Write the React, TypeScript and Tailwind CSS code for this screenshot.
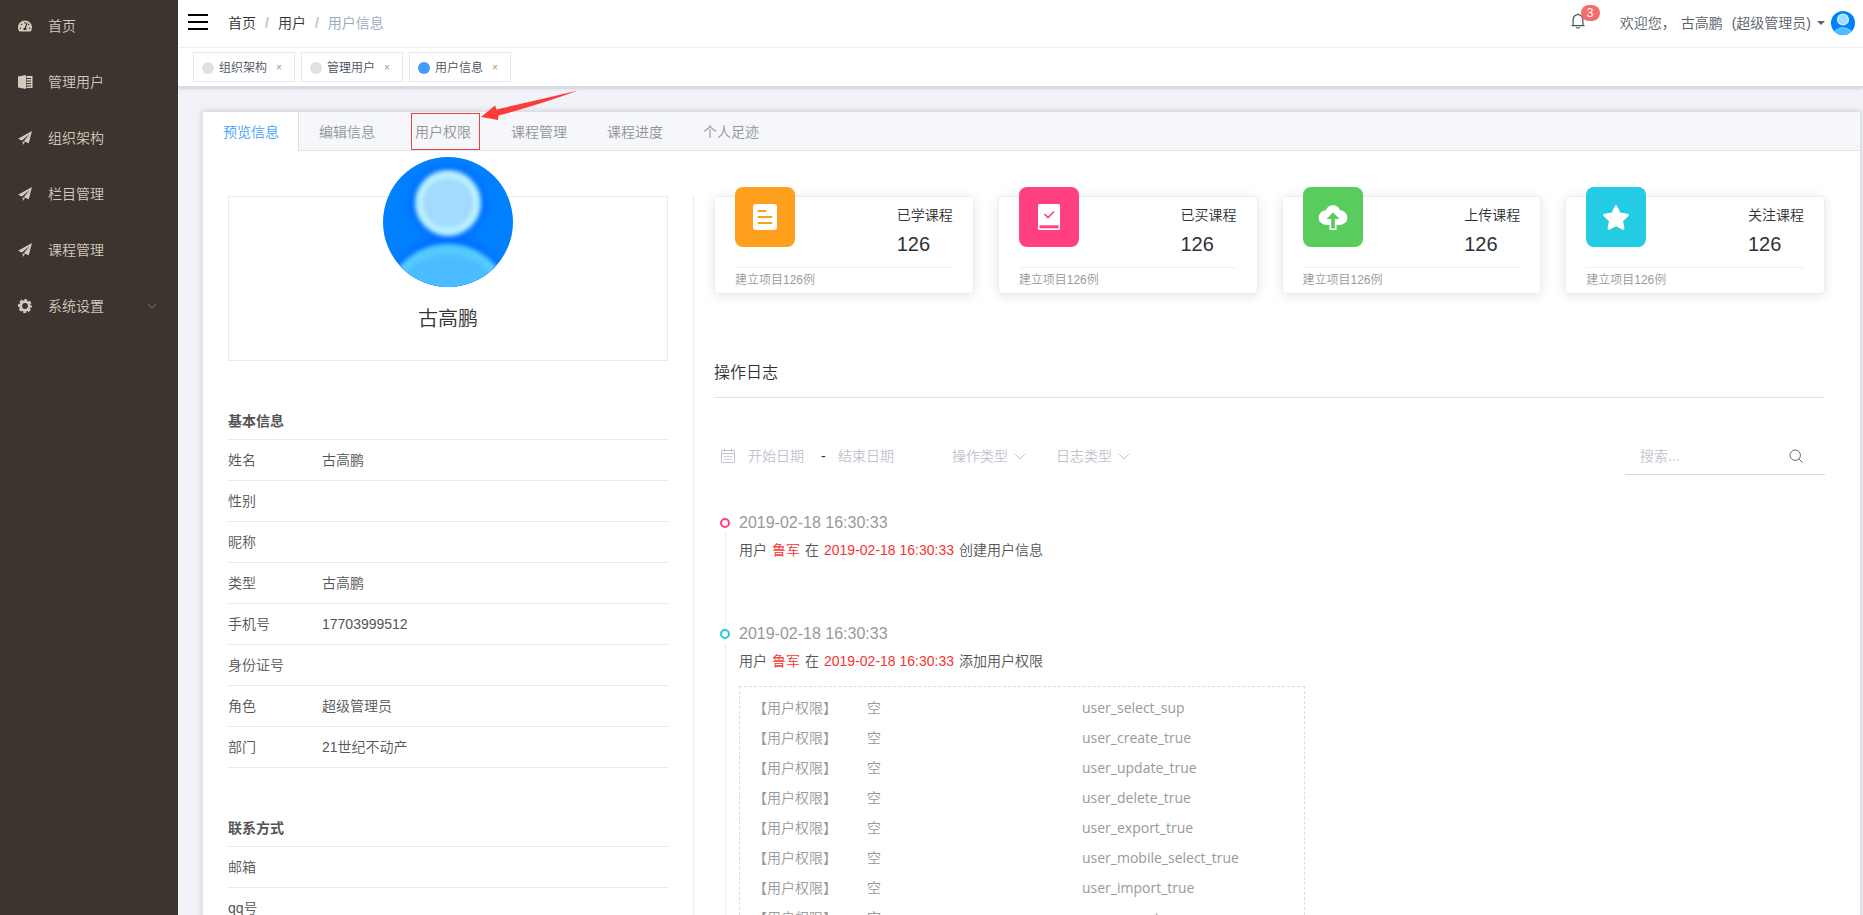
import { FaTachometerAlt } from "react-icons/fa";

const AVATAR_BLUE = "#0080ff";

function Avatar({ id, className, soft }: { id: string; className: string; soft?: boolean }) {
  return (
    <svg viewBox="0 0 130 130" className={className} role="img" aria-label="古高鹏">
      <defs>
        <clipPath id={id + "-clip"}>
          <circle cx="65" cy="65" r="65" />
        </clipPath>
        <filter id={id + "-glow"} x="-30%" y="-30%" width="160%" height="160%">
          <feGaussianBlur stdDeviation={soft ? 2 : 0.5} />
        </filter>
        <filter id={id + "-halo"} x="-30%" y="-30%" width="160%" height="160%">
          <feGaussianBlur stdDeviation="4" />
        </filter>
      </defs>
      <g clipPath={`url(#${id}-clip)`}>
        <rect width="130" height="130" fill={AVATAR_BLUE} />
        {soft && (
          <g filter={`url(#${id}-halo)`} fill="#006eff">
            <circle cx="65" cy="46" r="38" />
            <ellipse cx="65" cy="140" rx="62" ry="60" />
          </g>
        )}
        <g filter={`url(#${id}-glow)`}>
          <circle cx="65" cy="46" r="33" fill="#b8f0ff" />
          <circle cx="65" cy="46" r="25" fill="#a3daff" />
          <ellipse cx="65" cy="142" rx="60" ry="55" fill="#54caff" />
          <ellipse cx="65" cy="148" rx="54" ry="50" fill="#4dbbff" />
        </g>
      </g>
    </svg>
  );
}

function PlaneIcon() {
  return (
    <svg viewBox="0 0 14 14" className="size-[14px]" fill="currentColor" aria-hidden="true">
      <path d="M14 0 0 7.800l4 1.700 7.700-6.800-5.900 7.500 5 2z" />
      <path d="M4.700 10.300V14l2.200-2.800z" />
    </svg>
  );
}

function ManageIcon() {
  return (
    <svg viewBox="0 0 15 14" className="h-[14px] w-[15px]" fill="currentColor" aria-hidden="true">
      <path d="M0 1.400 8 0v14L0 12.600z" />
      <path d="M8.500 1h6v12h-6v-1.500H13v-1H8.500V9H13V8H8.500V6.500H13v-1H8.500V4H13V3H8.500z" />
    </svg>
  );
}

function GearIcon() {
  return (
    <svg viewBox="0 0 14 14" className="size-[14px]" fill="none" stroke="currentColor" aria-hidden="true">
      <circle cx="7" cy="7" r="4.300" strokeWidth="2.800" />
      <circle cx="7" cy="7" r="6.100" strokeWidth="1.800" strokeDasharray="3 1.790" strokeDashoffset="1.500" />
    </svg>
  );
}

function Chevron({ className }: { className: string }) {
  return (
    <svg viewBox="0 0 12 7" className={className} fill="none" stroke="currentColor" aria-hidden="true">
      <path d="m.7.7 5.300 5.300L11.300.7" />
    </svg>
  );
}

const menu = [
  { label: "首页", icon: <FaTachometerAlt className="size-[14px]" /> },
  { label: "管理用户", icon: <ManageIcon /> },
  { label: "组织架构", icon: <PlaneIcon /> },
  { label: "栏目管理", icon: <PlaneIcon /> },
  { label: "课程管理", icon: <PlaneIcon /> },
  { label: "系统设置", icon: <GearIcon />, expandable: true },
];

function Sidebar() {
  return (
    <nav className="w-[178px] shrink-0 bg-[#3c342e] text-[#d3c9bd]">
      <ul>
        {menu.map((item) => (
          <li key={item.label}>
            <a href="#" className="flex h-14 items-center pr-[21px] pb-1 pl-[18px]">
              <span className="flex w-[30px] items-center">{item.icon}</span>
              <span className="flex-1">{item.label}</span>
              {item.expandable && <Chevron className="h-[6px] w-[10px] text-[#8a847e]" />}
            </a>
          </li>
        ))}
      </ul>
    </nav>
  );
}

function TopBar() {
  return (
    <header className="flex h-12 items-center justify-between border-b border-[#f3f3f3] pr-2 pb-[2px] pl-[10px]">
      <div className="flex items-center">
        <button aria-label="菜单" className="mr-5 pb-[2px]">
          <svg viewBox="0 0 20 16" className="h-4 w-5" fill="#000" aria-hidden="true">
            <path d="M0 0h20v2H0zM0 7h20v2H0zM0 14h20v2H0z" />
          </svg>
        </button>
        <nav className="flex text-[#303133]">
          <a href="#">首页</a>
          <span className="mx-[9px] font-bold text-[#c0c4cc]">/</span>
          <a href="#">用户</a>
          <span className="mx-[9px] font-bold text-[#c0c4cc]">/</span>
          <span className="text-[#97a8be]">用户信息</span>
        </nav>
      </div>
      <div className="flex items-center">
        <button aria-label="通知" className="relative mr-[35px] pb-1">
          <svg viewBox="0 0 14 16" className="h-4 w-[14px]" fill="none" stroke="#48505c" strokeWidth="1.200" aria-hidden="true">
            <path d="M.5 12.700h13M2.100 12.700V6.500a4.900 4.900 0 0 1 9.800 0v6.200M5.300 14.200a1.900 1.500 0 0 0 3.400 0M7 1.600V.4" />
          </svg>
          <span className="absolute -top-2 left-[10px] flex h-4 w-[19px] items-center justify-center rounded-full bg-[#f56c6c] text-xs text-white">
            3
          </span>
        </button>
        <button className="flex items-center text-[#5a5e66]">
          <span className="mr-[5px]">欢迎您，</span>
          <span className="mr-[9px]">古高鹏</span>
          <span>(超级管理员)</span>
          <svg viewBox="0 0 8 4" className="mx-[6px] h-1 w-2" fill="currentColor" aria-hidden="true">
            <path d="M0 0h8L4 4z" />
          </svg>
          <Avatar id="small" className="size-6" />
        </button>
      </div>
    </header>
  );
}

const openPages = [
  { label: "组织架构", active: false },
  { label: "管理用户", active: false },
  { label: "用户信息", active: true },
];

function PageTags() {
  return (
    <div className="flex gap-[6px] border-b-2 border-[#d8dce1] px-[15px] py-1 text-xs text-[#495060] shadow-sm">
      {openPages.map((page) => (
        <div key={page.label} className="flex h-[30px] w-[102px] items-center border border-[#e6e8ea] bg-white pt-px pl-2">
          <span className={page.active ? "size-3 rounded-full bg-[#409eff]" : "size-3 rounded-full bg-[#e0e1e7]"} />
          <a href="#" className="ml-[5px]">{page.label}</a>
          <button aria-label={"关闭" + page.label} className="ml-[9px] text-[10px] text-[#999]">×</button>
        </div>
      ))}
    </div>
  );
}

const tabs = ["预览信息", "编辑信息", "用户权限", "课程管理", "课程进度", "个人足迹"];

function TabBar() {
  return (
    <div role="tablist" className="flex h-[39px] bg-[#f5f7fa] shadow-[inset_0_-1px_0_#dfe4ed]">
      {tabs.map((tab, i) => (
        <button
          key={tab}
          role="tab"
          aria-selected={i === 0}
          className={
            i === 0
              ? "border-r border-[#dcdfe6] bg-white pr-[19px] pl-5 text-[#409eff]"
              : "relative px-5 text-[#909399]"
          }
        >
          {tab}
          {tab === "用户权限" && (
            <>
              <span className="absolute top-px bottom-px left-4 w-[69px] border border-[#f04046]" />
              <svg viewBox="0 0 98 30" className="absolute -top-[22px] left-[86px] z-10 h-[30px] w-[98px]" fill="#fc3a3a" aria-hidden="true">
                <path d="M0 27 14 15.500l1.500 4Q57 10 97 .5 59 14.500 17.500 25.500l-.5 4.500z" />
              </svg>
            </>
          )}
        </button>
      ))}
    </div>
  );
}

function InfoSection({ title, rows }: { title: string; rows: [string, string][] }) {
  return (
    <section className="mt-[50px]">
      <h3 className="flex h-[29px] items-start border-b border-[#ebebee] font-bold">{title}</h3>
      <dl>
        {rows.map(([name, value]) => (
          <div key={name} className="flex h-[41px] items-center border-b border-[#ebebee]">
            <dt className="w-[94px]">{name}</dt>
            <dd>{value}</dd>
          </div>
        ))}
      </dl>
    </section>
  );
}

function Profile() {
  return (
    <div className="w-[440px] shrink-0 text-[#555]">
      <div className="flex h-[165px] flex-col items-center border border-[#ebebee]">
        <Avatar id="large" className="-mt-10 size-[130px] shrink-0" soft />
        <h2 className="mt-[17px] text-xl leading-[30px] text-[#333]">古高鹏</h2>
      </div>
      <InfoSection
        title="基本信息"
        rows={[
          ["姓名", "古高鹏"],
          ["性别", ""],
          ["昵称", ""],
          ["类型", "古高鹏"],
          ["手机号", "17703999512"],
          ["身份证号", ""],
          ["角色", "超级管理员"],
          ["部门", "21世纪不动产"],
        ]}
      />
      <InfoSection title="联系方式" rows={[["邮箱", ""], ["qq号", ""]]} />
    </div>
  );
}

const stats = [
  {
    title: "已学课程",
    tile: "bg-[#ff9f1e]",
    icon: (
      <>
        <rect x="3" y="2" width="24" height="26" rx="3" fill="#fff" />
        <path d="M8.500 9h7M8.500 15h13M8.500 21h13" stroke="#ff9f1e" strokeWidth="2" strokeLinecap="round" />
      </>
    ),
  },
  {
    title: "已买课程",
    tile: "bg-[#ff4081]",
    icon: (
      <>
        <rect x="4" y="2" width="22" height="26" rx="1.500" fill="#fff" />
        <path d="m10.500 12 3.500 3.500L20 9.500" stroke="#ff4081" strokeWidth="1.600" fill="none" />
        <path d="M5.500 23.300h19v3h-19z" fill="#ff4081" />
      </>
    ),
  },
  {
    title: "上传课程",
    tile: "bg-[#58cc5c]",
    icon: (
      <>
        <path d="M11.500 28v-5H8A7.200 7.200 0 0 1 8 8.300 7.400 7.400 0 0 1 22 8.300 7.200 7.200 0 0 1 22 23h-3.500v5z" fill="#fff" />
        <path d="M15 10.500 21.500 17h-4.700v9.500h-3.600V17H8.500z" fill="#58cc5c" />
      </>
    ),
  },
  {
    title: "关注课程",
    tile: "bg-[#23cce2]",
    icon: (
      <path
        d="m15 4.500 3.600 7.300 8 1.200-5.800 5.600 1.400 8L15 22.800l-7.200 3.800 1.400-8L3.400 13l8-1.200z"
        fill="#fff"
        stroke="#fff"
        strokeWidth="2.500"
        strokeLinejoin="round"
      />
    ),
  },
];

function StatCards() {
  return (
    <div className="grid grid-cols-4 gap-6">
      {stats.map((s) => (
        <article key={s.title} className="h-[98px] rounded border border-[#ebeef5] px-5 shadow-[0_2px_12px_0_rgba(0,0,0,0.1)]">
          <div className="flex h-[71px] items-start justify-between border-b border-[#f2f2f2]">
            <div className={"-mt-[10px] flex size-[60px] items-center justify-center rounded-lg " + s.tile}>
              <svg viewBox="0 0 30 30" className="size-[30px]" aria-hidden="true">{s.icon}</svg>
            </div>
            <div className="text-[#303133]">
              <div className="mt-2 leading-5">{s.title}</div>
              <div className="mt-1 text-xl leading-[30px]">126</div>
            </div>
          </div>
          <p className="text-xs leading-6 text-[#999]">建立项目126例</p>
        </article>
      ))}
    </div>
  );
}

function Filters() {
  const field = "bg-transparent outline-none placeholder:text-[#c0c4cc]";
  return (
    <form className="mt-[42px] flex h-8 items-center text-[#c0c4cc]">
      <svg viewBox="0 0 14 14" className="mr-[13px] ml-[7px] size-[14px]" fill="none" stroke="currentColor" aria-hidden="true">
        <path d="M.5 1.500h13v12H.5zM.5 4.500h13M3.500 0v3M10.500 0v3" />
        <path d="M3 7.500h8M3 10.500h8" strokeDasharray="2 1" />
      </svg>
      <input aria-label="开始日期" placeholder="开始日期" className={"w-[73px] " + field} />
      <span className="w-[17px] text-[#303133]">-</span>
      <input aria-label="结束日期" placeholder="结束日期" className={"w-[114px] " + field} />
      <label className="mr-[30px] flex items-center gap-[6px]">
        <select aria-label="操作类型" className="w-14 appearance-none outline-none">
          <option>操作类型</option>
        </select>
        <Chevron className="h-[7px] w-3" />
      </label>
      <label className="flex items-center gap-[6px]">
        <select aria-label="日志类型" className="w-14 appearance-none outline-none">
          <option>日志类型</option>
        </select>
        <Chevron className="h-[7px] w-3" />
      </label>
      <div className="ml-auto flex h-[37px] w-[200px] items-center border-b border-[#d9d9d9] pr-[22px] pl-[15px]">
        <input aria-label="搜索" placeholder="搜索..." className={"min-w-0 flex-1 " + field} />
        <button type="button" aria-label="搜索" className="text-[#666]">
          <svg viewBox="0 0 14 14" className="size-[14px]" fill="none" stroke="currentColor" aria-hidden="true">
            <circle cx="6.200" cy="6.200" r="5.200" />
            <path d="m10 10 3.500 3.500" />
          </svg>
        </button>
      </div>
    </form>
  );
}

const permissions = [
  "user_select_sup",
  "user_create_true",
  "user_update_true",
  "user_delete_true",
  "user_export_true",
  "user_mobile_select_true",
  "user_import_true",
  "user_export_sup",
];

function LogEntry({ ring, action, children }: { ring: string; action: string; children?: React.ReactNode }) {
  return (
    <li className="flex min-h-[111px]">
      <div className="mr-[9px] ml-[6px] flex w-[10px] flex-col items-center">
        <span className={"mt-[6px] size-[10px] shrink-0 rounded-full border-2 " + ring} />
        <span className="mt-1 w-px flex-1 bg-[#ededf0]" />
      </div>
      <div>
        <time className="block text-base leading-[22px] text-[#999]">2019-02-18 16:30:33</time>
        <p className="mt-[6px] flex gap-[5px] leading-5 text-[#555]">
          <span>用户</span>
          <span className="text-[#f93232]">鲁军</span>
          <span>在</span>
          <span className="text-[#f93232]">2019-02-18 16:30:33</span>
          <span>{action}</span>
        </p>
        {children}
      </div>
    </li>
  );
}

function ActivityLog() {
  return (
    <section>
      <h2 className="mt-[67px] h-[37px] border-b border-[#e4e4e7] text-base leading-6 text-[#303133]">操作日志</h2>
      <Filters />
      <ol className="mt-10">
        <LogEntry ring="border-[#ff4081]" action="创建用户信息" />
        <LogEntry ring="border-[#23cce2]" action="添加用户权限">
          <table className="mt-[15px] block w-[566px] border border-dashed border-[#dcdcdc] py-[6px] pl-[13px] text-[#999]">
            <tbody>
              {permissions.map((p) => (
                <tr key={p} className="h-[30px]">
                  <td className="w-[114px]">【用户权限】</td>
                  <td className="w-[215px]">空</td>
                  <td className="font-['Open_Sans'] font-normal">{p}</td>
                </tr>
              ))}
            </tbody>
          </table>
        </LogEntry>
      </ol>
    </section>
  );
}

export default function App() {
  return (
    <div className="flex h-screen overflow-hidden bg-[#f2f3f8] font-['Liberation_Sans','Noto_Sans_CJK_SC',sans-serif] text-sm font-[350]">
      <Sidebar />
      <div className="flex min-w-0 flex-1 flex-col">
        <div className="bg-white">
          <TopBar />
          <PageTags />
        </div>
        <main className="min-h-0 flex-1 pt-[23px] pr-[2px] pl-6">
          <div className="border border-[#dcdfe6] bg-white shadow-[0_0_6px_rgba(0,0,0,0.15)]">
            <TabBar />
            <div className="flex pt-[45px] pr-[35px] pl-[25px]">
              <Profile />
              <div className="ml-[25px] min-w-0 flex-1 border-l border-[#ebebee] pl-5">
                <StatCards />
                <ActivityLog />
              </div>
            </div>
          </div>
        </main>
      </div>
    </div>
  );
}
